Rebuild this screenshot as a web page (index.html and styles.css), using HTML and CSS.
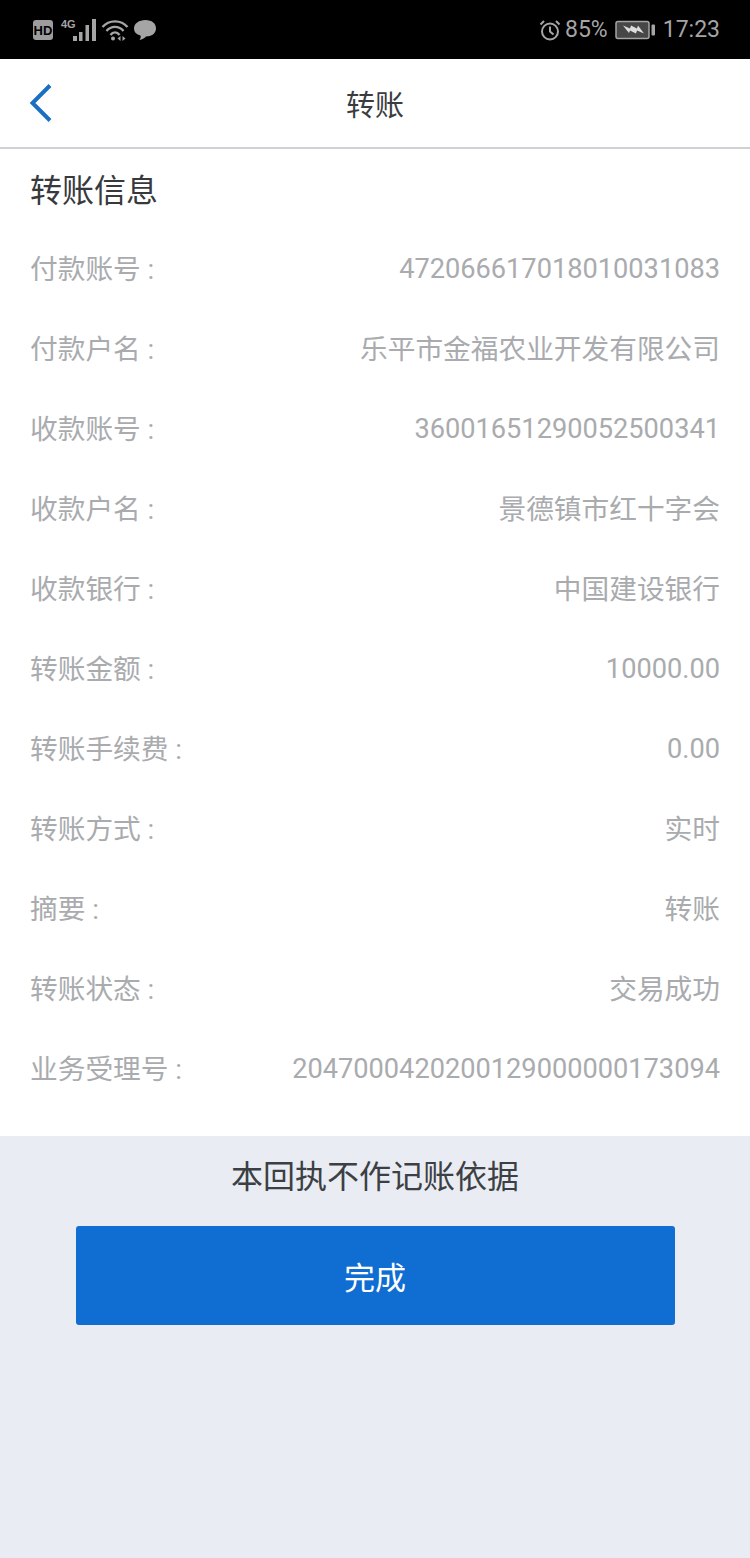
FILE: index.html
```html
<!DOCTYPE html>
<html lang="zh">
<head>
<meta charset="utf-8">
<title>转账</title>
<link rel="stylesheet" href="styles.css">
</head>
<body>
<div class="status">
  <div class="status-group">
    <svg class="ic-hd" width="22" height="22" viewBox="0 0 22 22"><rect x="1" y="1" width="20" height="20" rx="3" fill="#9d9d9d"/><text x="11" y="16" class="hd-text" text-anchor="middle">HD</text></svg>
    <svg class="ic-sig" width="37" height="24" viewBox="0 0 37 24"><text x="1" y="10" class="g-text">4G</text><rect x="13" y="18" width="4" height="5" fill="#a5a5a5"/><rect x="19" y="14" width="3.500" height="9" fill="#a5a5a5"/><rect x="25.500" y="7" width="3.500" height="16" fill="#a5a5a5"/><rect x="32" y="1" width="4" height="22" fill="#a5a5a5"/></svg>
    <svg class="ic-wifi" width="28" height="24" viewBox="0 0 28 24" fill="none" stroke="#a5a5a5" stroke-width="2.400"><path d="M1.500 9 C8 1.500 20 1.500 26.500 9"/><path d="M5.500 13 C10 7.500 18 7.500 22.500 13"/><path d="M9.500 17 C12 13.500 16 13.500 18.500 17"/><circle cx="12" cy="20.500" r="2" fill="#a5a5a5" stroke="none"/><path d="M19.500 18 L16.500 20.500 L19.500 23 Z M21.500 18 L24.500 20.500 L21.500 23 Z" fill="#a5a5a5" stroke="none"/></svg>
    <svg class="ic-msg" width="24" height="24" viewBox="0 0 24 24"><path d="M12.500 2 C19 2 23 5.500 23 10.500 C23 15.500 18.500 18.500 13 18.500 C11.500 20.500 9 21.500 6.500 22 C7.500 20.500 8 19 7.500 17.500 C3.500 16.500 1 14 1 10.500 C1 5.500 6 2 12.500 2 Z" fill="#a5a5a5"/></svg>
  </div>
  <div class="status-group right">
    <svg width="22" height="22" viewBox="0 0 22 22" fill="none" stroke="#a5a5a5" stroke-width="2"><circle cx="11" cy="12.500" r="8"/><path d="M11 7.500 V12.500 L14.500 15.500"/><path d="M1.500 5.500 L5 2 M20.500 5.500 L17 2"/></svg>
    <span class="pct">85%</span>
    <svg class="batt" width="41" height="20" viewBox="0 0 41 20"><rect x="1" y="1.500" width="33" height="17" rx="2" fill="#474747" stroke="#a5a5a5" stroke-width="1.500"/><rect x="36.500" y="4.500" width="3.500" height="11" rx="1" fill="#a5a5a5"/><path d="M8 5.500 L15 8.500 L16 5.500 L22 8.500 L23 5.500 L29 13.500 L22 10.500 L21 13.500 L15 10.500 L14 13 Z" fill="#dedede"/></svg>
    <span class="time">17:23</span>
  </div>
</div>

<header class="nav">
  <svg class="back" width="26" height="42" viewBox="0 0 26 42" fill="none" stroke="#1a6fc4" stroke-width="4"><path d="M22 3.500 L4.500 21 L22 38.500"/></svg>
  <h1 class="nav-title">转账</h1>
</header>

<main class="info">
  <h2 class="info-title">转账信息</h2>
  <div class="row"><span>付款账号 :</span><span class="num">472066617018010031083</span></div>
  <div class="row"><span>付款户名 :</span><span>乐平市金福农业开发有限公司</span></div>
  <div class="row"><span>收款账号 :</span><span class="num">36001651290052500341</span></div>
  <div class="row"><span>收款户名 :</span><span>景德镇市红十字会</span></div>
  <div class="row"><span>收款银行 :</span><span>中国建设银行</span></div>
  <div class="row"><span>转账金额 :</span><span class="num">10000.00</span></div>
  <div class="row"><span>转账手续费 :</span><span class="num">0.00</span></div>
  <div class="row"><span>转账方式 :</span><span>实时</span></div>
  <div class="row"><span>摘要 :</span><span>转账</span></div>
  <div class="row"><span>转账状态 :</span><span>交易成功</span></div>
  <div class="row"><span>业务受理号 :</span><span class="num">2047000420200129000000173094</span></div>
</main>

<section class="foot">
  <p class="note">本回执不作记账依据</p>
  <button class="done" type="button">完成</button>
</section>
</body>
</html>
```

FILE: styles.css
```css
* { box-sizing: border-box; }
html, body { margin: 0; padding: 0; }
body {
  width: 750px;
  height: 1558px;
  background: #e9ecf2;
  font-family: "Roboto", "Noto Sans CJK SC", sans-serif;
  display: flex;
  flex-direction: column;
}
.status {
  height: 59px;
  background: #000;
  color: #a5a5a5;
  display: flex;
  justify-content: space-between;
  align-items: center;
  padding: 0 30px 0 32px;
  flex: none;
}
.status-group { display: flex; align-items: center; gap: 4px; }
.ic-hd { margin-right: 2px; }
.status-group.right { gap: 0; }
.hd-text { font: 700 13px "Liberation Sans", sans-serif; fill: #000; }
.g-text { font: 700 11px "Liberation Sans", sans-serif; fill: #a5a5a5; }
.pct { font-size: 23px; margin-left: 4px; }
.batt { margin: 0 7px; }
.time { font-size: 23px; }
.nav {
  height: 90px;
  background: #fff;
  border-bottom: 2px solid #cfd1d4;
  flex: none;
  display: flex;
  align-items: center;
  justify-content: center;
  position: relative;
}
.back { position: absolute; left: 28px; top: 23px; }
.nav-title { margin: 0; font-size: 29px; font-weight: 400; color: #3a3c40; }
.info {
  background: #fff;
  height: 987px;
  flex: none;
  padding: 0 30px;
}
.info-title {
  margin: 0;
  height: 81px;
  line-height: 84px;
  font-size: 32px;
  font-weight: 400;
  color: #37393d;
}
.row {
  height: 80px;
  display: flex;
  justify-content: space-between;
  align-items: center;
  font-size: 27.700px;
  line-height: 1;
  color: #a9abae;
}
.num { font-size: 27.200px; }
.foot { display: flex; flex-direction: column; align-items: center; }
.note { margin: 0; height: 90px; line-height: 82px; font-size: 32px; color: #3c3f44; }
.done {
  width: 599px;
  height: 99px;
  border: 0;
  border-radius: 3px;
  background: #106dd2;
  color: #fff;
  font: inherit;
  font-size: 31px;
}
```
